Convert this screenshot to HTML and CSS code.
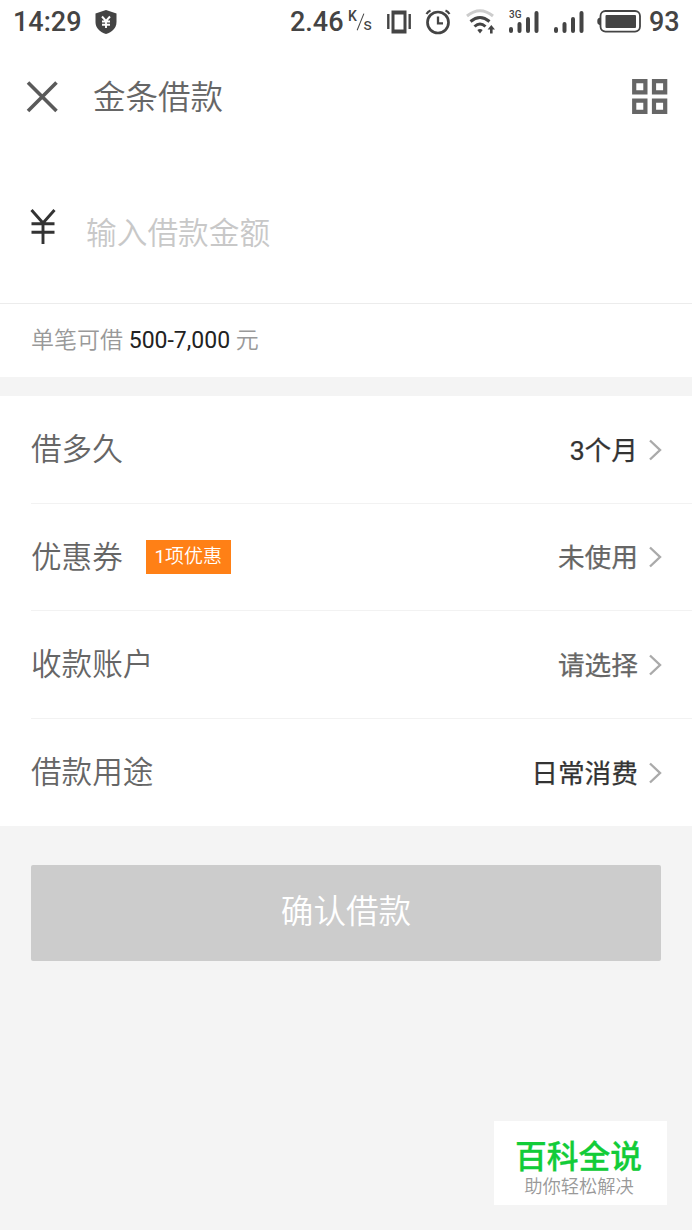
FILE: index.html
```html
<!DOCTYPE html>
<html lang="zh-CN">
<head>
    <meta charset="UTF-8">
    <meta name="viewport" content="width=device-width, initial-scale=1.0">
    <title>金条借款</title>
    <link rel="stylesheet" href="styles.css">
</head>
<body>
    <div class="status-bar">
        <span class="time">14:29</span>
        <svg class="shield" width="22" height="24" viewBox="0 0 22 24">
            <path d="M11 0 L21.5 3.5 V12 C21.5 18 17 22 11 24 C5 22 .5 18 .5 12 V3.5 Z" fill="#444"/>
            <path d="M7 6.5 L11 11 L15 6.5 M11 11 V18 M7 11.5 H15 M7 14.7 H15" fill="none" stroke="#fff" stroke-width="1.9"/>
        </svg>
        <div class="status-right">
            <span class="speed">2.46</span>
            <span class="unit"><sup>K</sup><i></i><sub>s</sub></span>
            <svg class="vibrate" width="24" height="24" viewBox="0 0 24 24">
                <path d="M1.3 4 V19 M22.7 4 V19" stroke="#444" stroke-width="2.4"/>
                <path d="M4.5 .5 H19.5 V23.5 H4.5 Z M7.5 4.5 V19.5 H16.5 V4.5 Z" fill="#444" fill-rule="evenodd"/>
            </svg>
            <svg class="alarm" width="26" height="26" viewBox="0 0 26 26">
                <circle cx="13" cy="13.5" r="10.5" fill="none" stroke="#444" stroke-width="2.7"/>
                <path d="M13 7.5 V14.3 H18" fill="none" stroke="#444" stroke-width="2.3"/>
                <path d="M1.5 5 Q3 2.5 5.5 1.5 M20.5 1.5 Q23 2.5 24.5 5" fill="none" stroke="#444" stroke-width="2.2"/>
            </svg>
            <svg class="wifi" width="30" height="26" viewBox="0 0 30 26">
                <path d="M1 7 Q14 -3.5 27 7" fill="none" stroke="#ccc" stroke-width="3"/>
                <path d="M4.5 12.5 Q14 4.5 23.5 12.5 M8.5 17.5 Q14 12.5 19.5 17.5" fill="none" stroke="#444" stroke-width="3"/>
                <path d="M11.3 21 Q14 19 16.7 21 L14 24.5 Z" fill="#444"/>
                <path d="M25.3 24.5 V19" stroke="#444" stroke-width="2.6"/>
                <path d="M21.6 20.5 L25.3 16 L29 20.5 Z" fill="#444"/>
            </svg>
            <span class="signal">
                <small>3G</small>
                <svg width="30" height="22" viewBox="0 0 30 22">
                    <path d="M2 18 V20 M10.5 13 V20 M19 8 V20 M27.5 2 V20" stroke="#444" stroke-width="4" stroke-linecap="round"/>
                </svg>
            </span>
            <span class="signal">
                <svg width="30" height="22" viewBox="0 0 30 22">
                    <path d="M2 18 V20 M10.5 13 V20 M19 8 V20 M27.5 2 V20" stroke="#444" stroke-width="4" stroke-linecap="round"/>
                </svg>
            </span>
            <svg class="battery" width="44" height="23" viewBox="0 0 44 23">
                <rect x="3.5" y="1" width="39.5" height="20.6" rx="5" fill="none" stroke="#444" stroke-width="1.8"/>
                <rect x="8.5" y="5" width="30.5" height="13" rx="1" fill="#444"/>
                <path d="M3.5 7.5 C.5 8 .3 9.5 .3 11.3 C.3 13 .5 14.8 3.5 15.2 Z" fill="#444"/>
            </svg>
            <span class="percent">93</span>
        </div>
    </div>

    <div class="header">
        <svg class="close" width="32" height="32" viewBox="0 0 32 32">
            <path d="M2 1.5 L30.5 30 M30.5 1.5 L2 30" stroke="#5a5a5a" stroke-width="3.6"/>
        </svg>
        <h1>金条借款</h1>
        <svg class="menu" width="36" height="36" viewBox="0 0 36 36">
            <path d="M2.2 2.2 H13.4 V13.4 H2.2 Z M22 2.2 H33.2 V13.4 H22 Z M2.2 21.6 H13.4 V32.8 H2.2 Z M22 21.6 H33.2 V32.8 H22 Z" fill="none" stroke="#666" stroke-width="4.2"/>
        </svg>
    </div>

    <div class="amount">
        <svg class="yen" width="26" height="36" viewBox="0 0 26 36">
            <path d="M1.5 1 L13 14 L24.5 1 M13 14 V35 M1.5 14.7 H24.5 M1.5 23.3 H24.5" fill="none" stroke="#333" stroke-width="2.9"/>
        </svg>
        <span class="placeholder">输入借款金额</span>
    </div>
    <div class="limit">单笔可借 <b>500-7,000</b> 元</div>

    <div class="list">
        <div class="row">
            <span class="label">借多久</span>
            <span class="value dark">3个月</span>
            <svg class="arrow" width="14" height="22" viewBox="0 0 14 22"><path d="M2 1.5 L12 11 L2 20.5"/></svg>
        </div>
        <div class="row">
            <span class="label">优惠券</span>
            <span class="badge">1项优惠</span>
            <span class="value">未使用</span>
            <svg class="arrow" width="14" height="22" viewBox="0 0 14 22"><path d="M2 1.5 L12 11 L2 20.5"/></svg>
        </div>
        <div class="row">
            <span class="label">收款账户</span>
            <span class="value">请选择</span>
            <svg class="arrow" width="14" height="22" viewBox="0 0 14 22"><path d="M2 1.5 L12 11 L2 20.5"/></svg>
        </div>
        <div class="row">
            <span class="label">借款用途</span>
            <span class="value dark">日常消费</span>
            <svg class="arrow" width="14" height="22" viewBox="0 0 14 22"><path d="M2 1.5 L12 11 L2 20.5"/></svg>
        </div>
    </div>

    <button class="confirm">确认借款</button>

    <div class="watermark">
        <strong>百科全说</strong>
        <span>助你轻松解决</span>
    </div>
</body>
</html>
```
FILE: styles.css
```css
* {
    box-sizing: border-box;
}

body {
    margin: 0;
    height: 1230px;
    position: relative;
    overflow: hidden;
    background: #f4f4f4;
    font-family: Roboto, "Noto Sans CJK SC DemiLight", "Noto Sans CJK SC", sans-serif;
    color: #666;
}

svg {
    display: block;
    flex: none;
}

/* barra de status */
.status-bar {
    display: flex;
    align-items: center;
    height: 43px;
    padding: 0 13px;
    background: #fff;
    color: #444;
    font-size: 27px;
    font-weight: 500;
    line-height: 41px;
}

.time {
    width: 82px;
    padding-top: 2px;
}

.status-right {
    display: flex;
    align-items: center;
    margin-left: auto;
}

.speed {
    width: 59px;
    padding: 2px 0 0 1px;
}

.unit {
    display: flex;
    width: 24px;
    height: 24px;
    margin-right: 15px;
    line-height: 15px;
}

.unit sup {
    font-size: 14px;
    line-height: 13px;
    vertical-align: baseline;
}

.unit i {
    width: 2px;
    height: 18px;
    margin: 3px 2px 0 3px;
    background: #444;
    transform: rotate(22deg);
}

.unit sub {
    margin-top: 7px;
    font-size: 17px;
    font-weight: 400;
    line-height: 15px;
    vertical-align: baseline;
}

.vibrate {
    margin-right: 14px;
}

.alarm {
    margin-right: 15px;
}

.wifi {
    margin-right: 13px;
}

.signal {
    position: relative;
    margin-right: 15px;
}

.signal small {
    position: absolute;
    top: -1px;
    left: 0;
    font-size: 10px;
    line-height: 10px;
}

.signal + .battery {
    margin-left: -2px;
}

.percent {
    width: 31px;
    margin-left: 7px;
    padding: 2px 0 0 1px;
}

/* cabeçalho */
.header {
    display: flex;
    align-items: center;
    height: 107px;
    padding: 0 24px 0 26px;
    background: #fff;
}

.header h1 {
    margin: 2px 0 0 35px;
    font-size: 32.5px;
    font-weight: 400;
    line-height: 40px;
}

.menu {
    margin-left: auto;
}

.amount {
    display: flex;
    align-items: center;
    height: 154px;
    padding-left: 30px;
    background: #fff;
    border-bottom: 1px solid #ececec;
}

.placeholder {
    margin: 8px 0 0 30px;
    font-size: 30.7px;
    color: #c8c8c8;
}

.limit {
    height: 73px;
    padding-left: 31px;
    background: #fff;
    color: #999;
    font-size: 23px;
    line-height: 73px;
}

.limit b {
    color: #222;
    font-weight: 400;
}

/* lista de opções */
.list {
    margin-top: 19px;
    padding-left: 31px;
    background: #fff;
}

.row {
    display: flex;
    align-items: center;
    height: 107.5px;
    padding-right: 30px;
    border-bottom: 1px solid #f2f2f2;
}

.row:last-child {
    border-bottom: none;
}

.label {
    margin-bottom: 4px;
    font-size: 30.6px;
}

.badge {
    width: 85px;
    height: 34px;
    margin: 1px 0 0 23px;
    background: #ff8016;
    color: #fff;
    font-size: 19px;
    line-height: 33px;
    text-align: center;
}

.value {
    margin: 0 0 2px auto;
    font-family: Roboto, "Noto Sans CJK SC", sans-serif;
    font-size: 26.7px;
    -webkit-text-stroke: 0.25px;
}

.dark {
    color: #333;
}

.arrow {
    margin: 1px 0 0 10px;
    fill: none;
    stroke: #aaa;
    stroke-width: 2.4;
}

.confirm {
    display: block;
    width: 630px;
    height: 96px;
    margin: 39px 0 0 31px;
    padding: 0 0 9px;
    border: none;
    border-radius: 2px;
    background: #ccc;
    color: #fff;
    font-family: inherit;
    font-size: 32.6px;
}

.watermark {
    position: absolute;
    top: 1121px;
    left: 494px;
    width: 173px;
    height: 84px;
    padding-top: 16px;
    background: #fff;
    text-align: center;
}

.watermark strong,
.watermark span {
    display: block;
}

.watermark strong {
    color: #12cc38;
    font-family: Roboto, "Noto Sans CJK SC", sans-serif;
    font-size: 31.8px;
    font-weight: 500;
    line-height: 40px;
    padding-right: 4px;
    -webkit-text-stroke: 0.3px;
}

.watermark span {
    color: #999;
    font-size: 18.3px;
    line-height: 20px;
    padding-right: 3px;
}
```
